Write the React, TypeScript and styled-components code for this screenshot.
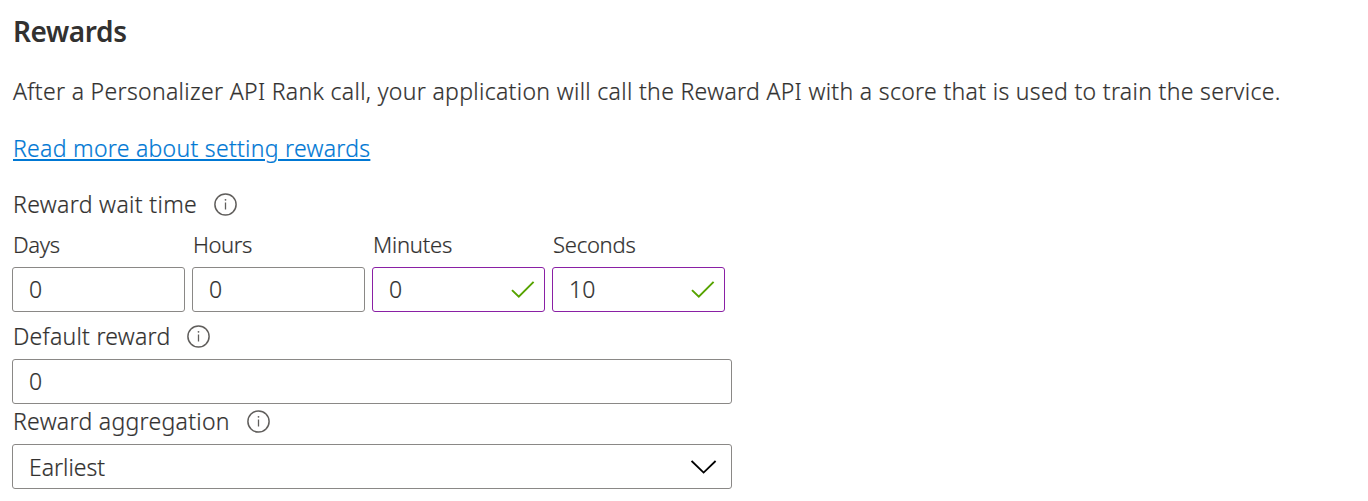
import React from "react";
import styled, { createGlobalStyle } from "styled-components";

const GlobalStyle = createGlobalStyle`
  * { box-sizing: border-box; }
  body {
    margin: 0;
    background: #fff;
    color: #323130;
    font-family: "Segoe UI", "Noto Sans", "Open Sans", sans-serif;
    font-size: 23px;
    font-weight: 360;
    line-height: 32px;
    -webkit-text-stroke: 0.2px currentColor;
  }
`;

const Panel = styled.main`
  width: 1368px;
  height: 501px;
  padding: 11px 12px 12px;
  display: flex;
  flex-direction: column;
  align-items: flex-start;
  white-space: nowrap;
`;

const Title = styled.h2`
  margin: 0 0 24px;
  padding-left: 1px;
  font-size: 28px;
  font-weight: 600;
  line-height: 40px;
  letter-spacing: -0.4px;
  -webkit-text-stroke: 0;
`;

const Description = styled.p`
  margin: 0 0 25px;
  padding-left: 1px;
  letter-spacing: 0.33px;
`;

const MoreLink = styled.a`
  margin: 0 0 24px 1px;
  color: #0078d4;
  letter-spacing: 0.29px;
  text-decoration: underline;
  text-decoration-thickness: 2px;
  text-underline-offset: 2px;
`;

const LabelRow = styled.div`
  display: flex;
  align-items: center;
  gap: 17px;
  height: 32px;
`;

const Label = styled.label<{ $tracking?: number }>`
  display: block;
  padding-left: 1px;
  letter-spacing: ${(p) => p.$tracking ?? 0}px;
`;

const UnitLabel = styled(Label)`
  font-size: 22px;
`;

const DurationGrid = styled.div`
  display: grid;
  grid-template-columns: repeat(4, 173px);
  gap: 7px;
  margin: 8px 0;
`;

const DurationField = styled.div`
  display: flex;
  flex-direction: column;
  gap: 7px;
`;

const FieldBox = styled.div<{ $edited?: boolean; $wide?: boolean }>`
  display: flex;
  align-items: center;
  justify-content: space-between;
  width: 100%;
  height: 45px;
  padding: 0 ${(p) => (p.$wide ? 14 : 9)}px 0 16px;
  border: 1px solid ${(p) => (p.$edited ? "#8a20a5" : "#8a8886")};
  border-radius: 3px;
`;

const Value = styled.span<{ $lift?: number; $tracking?: number }>`
  padding-bottom: ${(p) => p.$lift ?? 0}px;
  letter-spacing: ${(p) => p.$tracking ?? 0}px;
`;

const WideField = styled.div`
  width: 720px;
  margin-bottom: 1px;
  display: flex;
  flex-direction: column;
  gap: 7px;
`;

const Icon = styled.svg`
  display: block;
  flex: none;
  fill: none;
`;

const InfoIcon = () => (
  <Icon width="24" height="24" viewBox="0 0 24 24">
    <circle cx="11.5" cy="12.5" r="10.6" stroke="#605e5c" strokeWidth="1.5" />
    <path d="M11.5 10.5v7" stroke="#605e5c" strokeWidth="1.3" />
    <circle cx="11.5" cy="7.8" r="0.9" fill="#605e5c" />
  </Icon>
);

const CheckIcon = () => (
  <Icon width="24" height="18" viewBox="0 0 24 18">
    <path d="M1 9.1 7.8 15.6 22.6 0.9" stroke="#57a300" strokeWidth="2" />
  </Icon>
);

const ChevronIcon = () => (
  <Icon width="26" height="14" viewBox="0 0 26 14">
    <path d="M0.6 1 12.6 12.6 24.6 1" stroke="#000" strokeWidth="1.8" />
  </Icon>
);

const durations = [
  { label: "Days", value: "0", edited: false, tracking: -0.35 },
  { label: "Hours", value: "0", edited: false, tracking: -0.4 },
  { label: "Minutes", value: "0", edited: true, tracking: -0.2 },
  { label: "Seconds", value: "10", edited: true, tracking: -0.25 },
];

export default function App() {
  return (
    <>
      <GlobalStyle />
      <Panel>
        <Title>Rewards</Title>
        <Description>
          After a Personalizer API Rank call, your application will call the Reward API with a score that is used to
          train the service.
        </Description>
        <MoreLink href="#">Read more about setting rewards</MoreLink>
        <LabelRow>
          <Label $tracking={0.35}>Reward wait time</Label>
          <InfoIcon />
        </LabelRow>
        <DurationGrid>
          {durations.map((d) => (
            <DurationField key={d.label}>
              <UnitLabel $tracking={d.tracking}>{d.label}</UnitLabel>
              <FieldBox $edited={d.edited}>
                <Value $lift={2}>{d.value}</Value>
                {d.edited && <CheckIcon />}
              </FieldBox>
            </DurationField>
          ))}
        </DurationGrid>
        <WideField>
          <LabelRow>
            <Label $tracking={0.26}>Default reward</Label>
            <InfoIcon />
          </LabelRow>
          <FieldBox $wide>
            <Value $lift={1}>0</Value>
          </FieldBox>
        </WideField>
        <WideField>
          <LabelRow>
            <Label $tracking={0.3}>Reward aggregation</Label>
            <InfoIcon />
          </LabelRow>
          <FieldBox $wide>
            <Value $tracking={0}>Earliest</Value>
            <ChevronIcon />
          </FieldBox>
        </WideField>
      </Panel>
    </>
  );
}
